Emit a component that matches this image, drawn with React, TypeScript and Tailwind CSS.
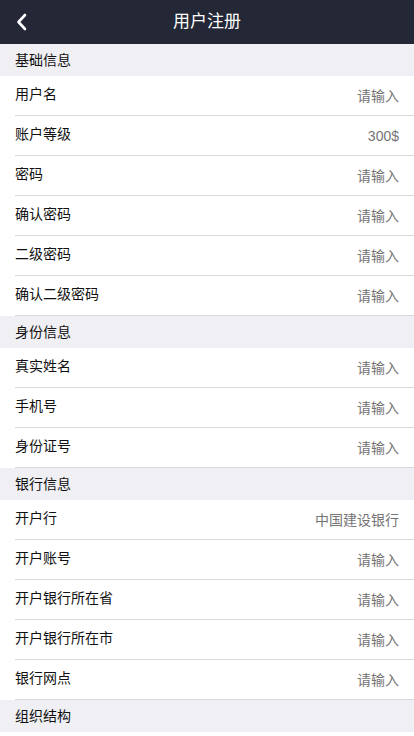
import { ReactNode } from "react";

interface Row {
  label: string;
  value: string;
}

const sections: { title: string; rows: Row[] }[] = [
  {
    title: "基础信息",
    rows: [
      { label: "用户名", value: "请输入" },
      { label: "账户等级", value: "300$" },
      { label: "密码", value: "请输入" },
      { label: "确认密码", value: "请输入" },
      { label: "二级密码", value: "请输入" },
      { label: "确认二级密码", value: "请输入" },
    ],
  },
  {
    title: "身份信息",
    rows: [
      { label: "真实姓名", value: "请输入" },
      { label: "手机号", value: "请输入" },
      { label: "身份证号", value: "请输入" },
    ],
  },
  {
    title: "银行信息",
    rows: [
      { label: "开户行", value: "中国建设银行" },
      { label: "开户账号", value: "请输入" },
      { label: "开户银行所在省", value: "请输入" },
      { label: "开户银行所在市", value: "请输入" },
      { label: "银行网点", value: "请输入" },
    ],
  },
  { title: "组织结构", rows: [] },
];

function SectionTitle({ children }: { children: ReactNode }) {
  return <div className="flex h-8 items-center bg-[#efeff4] px-[15px] text-[14px] text-[#111]">{children}</div>;
}

export default function App() {
  return (
    <div
      className="min-h-[736px] w-[414px] bg-white"
      style={{ fontFamily: '"Liberation Sans", "Noto Sans CJK SC", sans-serif' }}
    >
      {/* Top bar */}
      <div className="relative flex h-11 items-center justify-center bg-[#232736]">
        <button className="absolute top-0 left-0 flex h-11 w-11 items-center justify-center">
          <svg width="14" height="18" viewBox="0 0 14 18" fill="none">
            <path d="M10 2 L3.5 9 L10 16" stroke="white" strokeWidth="2.6" strokeLinecap="round" strokeLinejoin="round" />
          </svg>
        </button>
        <span className="text-[17px] text-white">用户注册</span>
      </div>

      {sections.map((section) => (
        <div key={section.title}>
          <SectionTitle>{section.title}</SectionTitle>
          <div className="pl-[15px]">
            {section.rows.map((row) => (
              <div key={row.label} className="flex h-10 items-center justify-between border-b border-[#d9d9d9] pr-[15px]">
                <span className="-mt-[3px] text-[14px] text-[#111]">{row.label}</span>
                <span className="mt-[1px] text-[14px] text-[#757575]">{row.value}</span>
              </div>
            ))}
          </div>
        </div>
      ))}
    </div>
  );
}
